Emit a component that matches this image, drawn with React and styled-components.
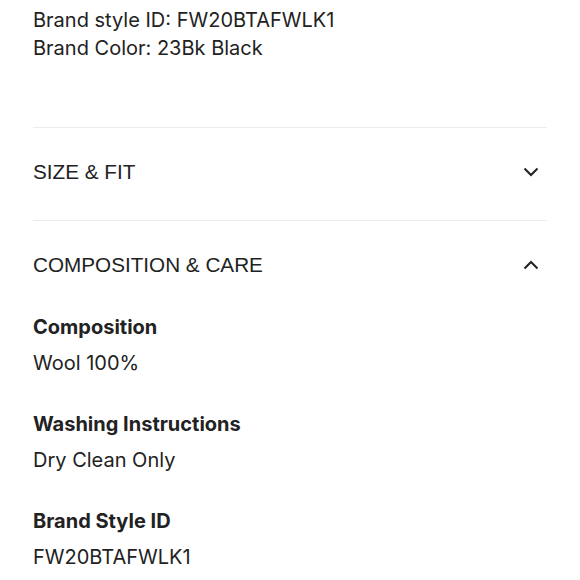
import React from "react";
import styled, { createGlobalStyle } from "styled-components";

const GlobalStyle = createGlobalStyle`
  html, body {
    margin: 0;
    padding: 0;
    background: #fff;
  }
  body {
    font-family: "Inter", "Liberation Sans", sans-serif;
    color: #222;
  }
`;

const Page = styled.div`
  padding: 6px 33px 0;
`;

const Line = styled.div`
  font-size: 20px;
  line-height: 28px;
`;

const Details = styled.div`
  margin-bottom: 65px;
`;

const Section = styled.div`
  border-top: 1px solid #ececec;
`;

const Header = styled.div`
  display: flex;
  align-items: center;
  justify-content: space-between;
  padding: 30px 0 34px;
  font-family: "Liberation Sans", Arial, sans-serif;
  font-size: 20.7px;
  line-height: 28px;
  text-transform: uppercase;
`;

const Chevron = styled.svg`
  width: 16px;
  height: 10px;
  margin-right: 8px;
  transform: ${(p) => (p.$open ? "rotate(180deg)" : "none")};
`;

const Content = styled.div`
  padding-bottom: 20px;
`;

const Label = styled.div`
  font-size: 20px;
  line-height: 28px;
  font-weight: 700;
  margin-bottom: 8px;
`;

const Value = styled.div`
  font-size: 20px;
  line-height: 28px;
  margin-bottom: 33px;
`;

function Arrow({ open }) {
  return (
    <Chevron $open={open} viewBox="0 0 16 10" fill="none">
      <path d="M1.5 1.5L8 8L14.5 1.5" stroke="#222" strokeWidth="2" />
    </Chevron>
  );
}

const care = [
  ["Composition", "Wool 100%"],
  ["Washing Instructions", "Dry Clean Only"],
  ["Brand Style ID", "FW20BTAFWLK1"],
];

export default function App() {
  return (
    <Page>
      <GlobalStyle />
      <Details>
        <Line>Brand style ID: FW20BTAFWLK1</Line>
        <Line>Brand Color: 23Bk Black</Line>
      </Details>
      <Section>
        <Header>
          <span>Size &amp; Fit</span>
          <Arrow />
        </Header>
      </Section>
      <Section>
        <Header>
          <span>Composition &amp; Care</span>
          <Arrow open />
        </Header>
        <Content>
          {care.map(([label, value]) => (
            <div key={label}>
              <Label>{label}</Label>
              <Value>{value}</Value>
            </div>
          ))}
        </Content>
      </Section>
    </Page>
  );
}
